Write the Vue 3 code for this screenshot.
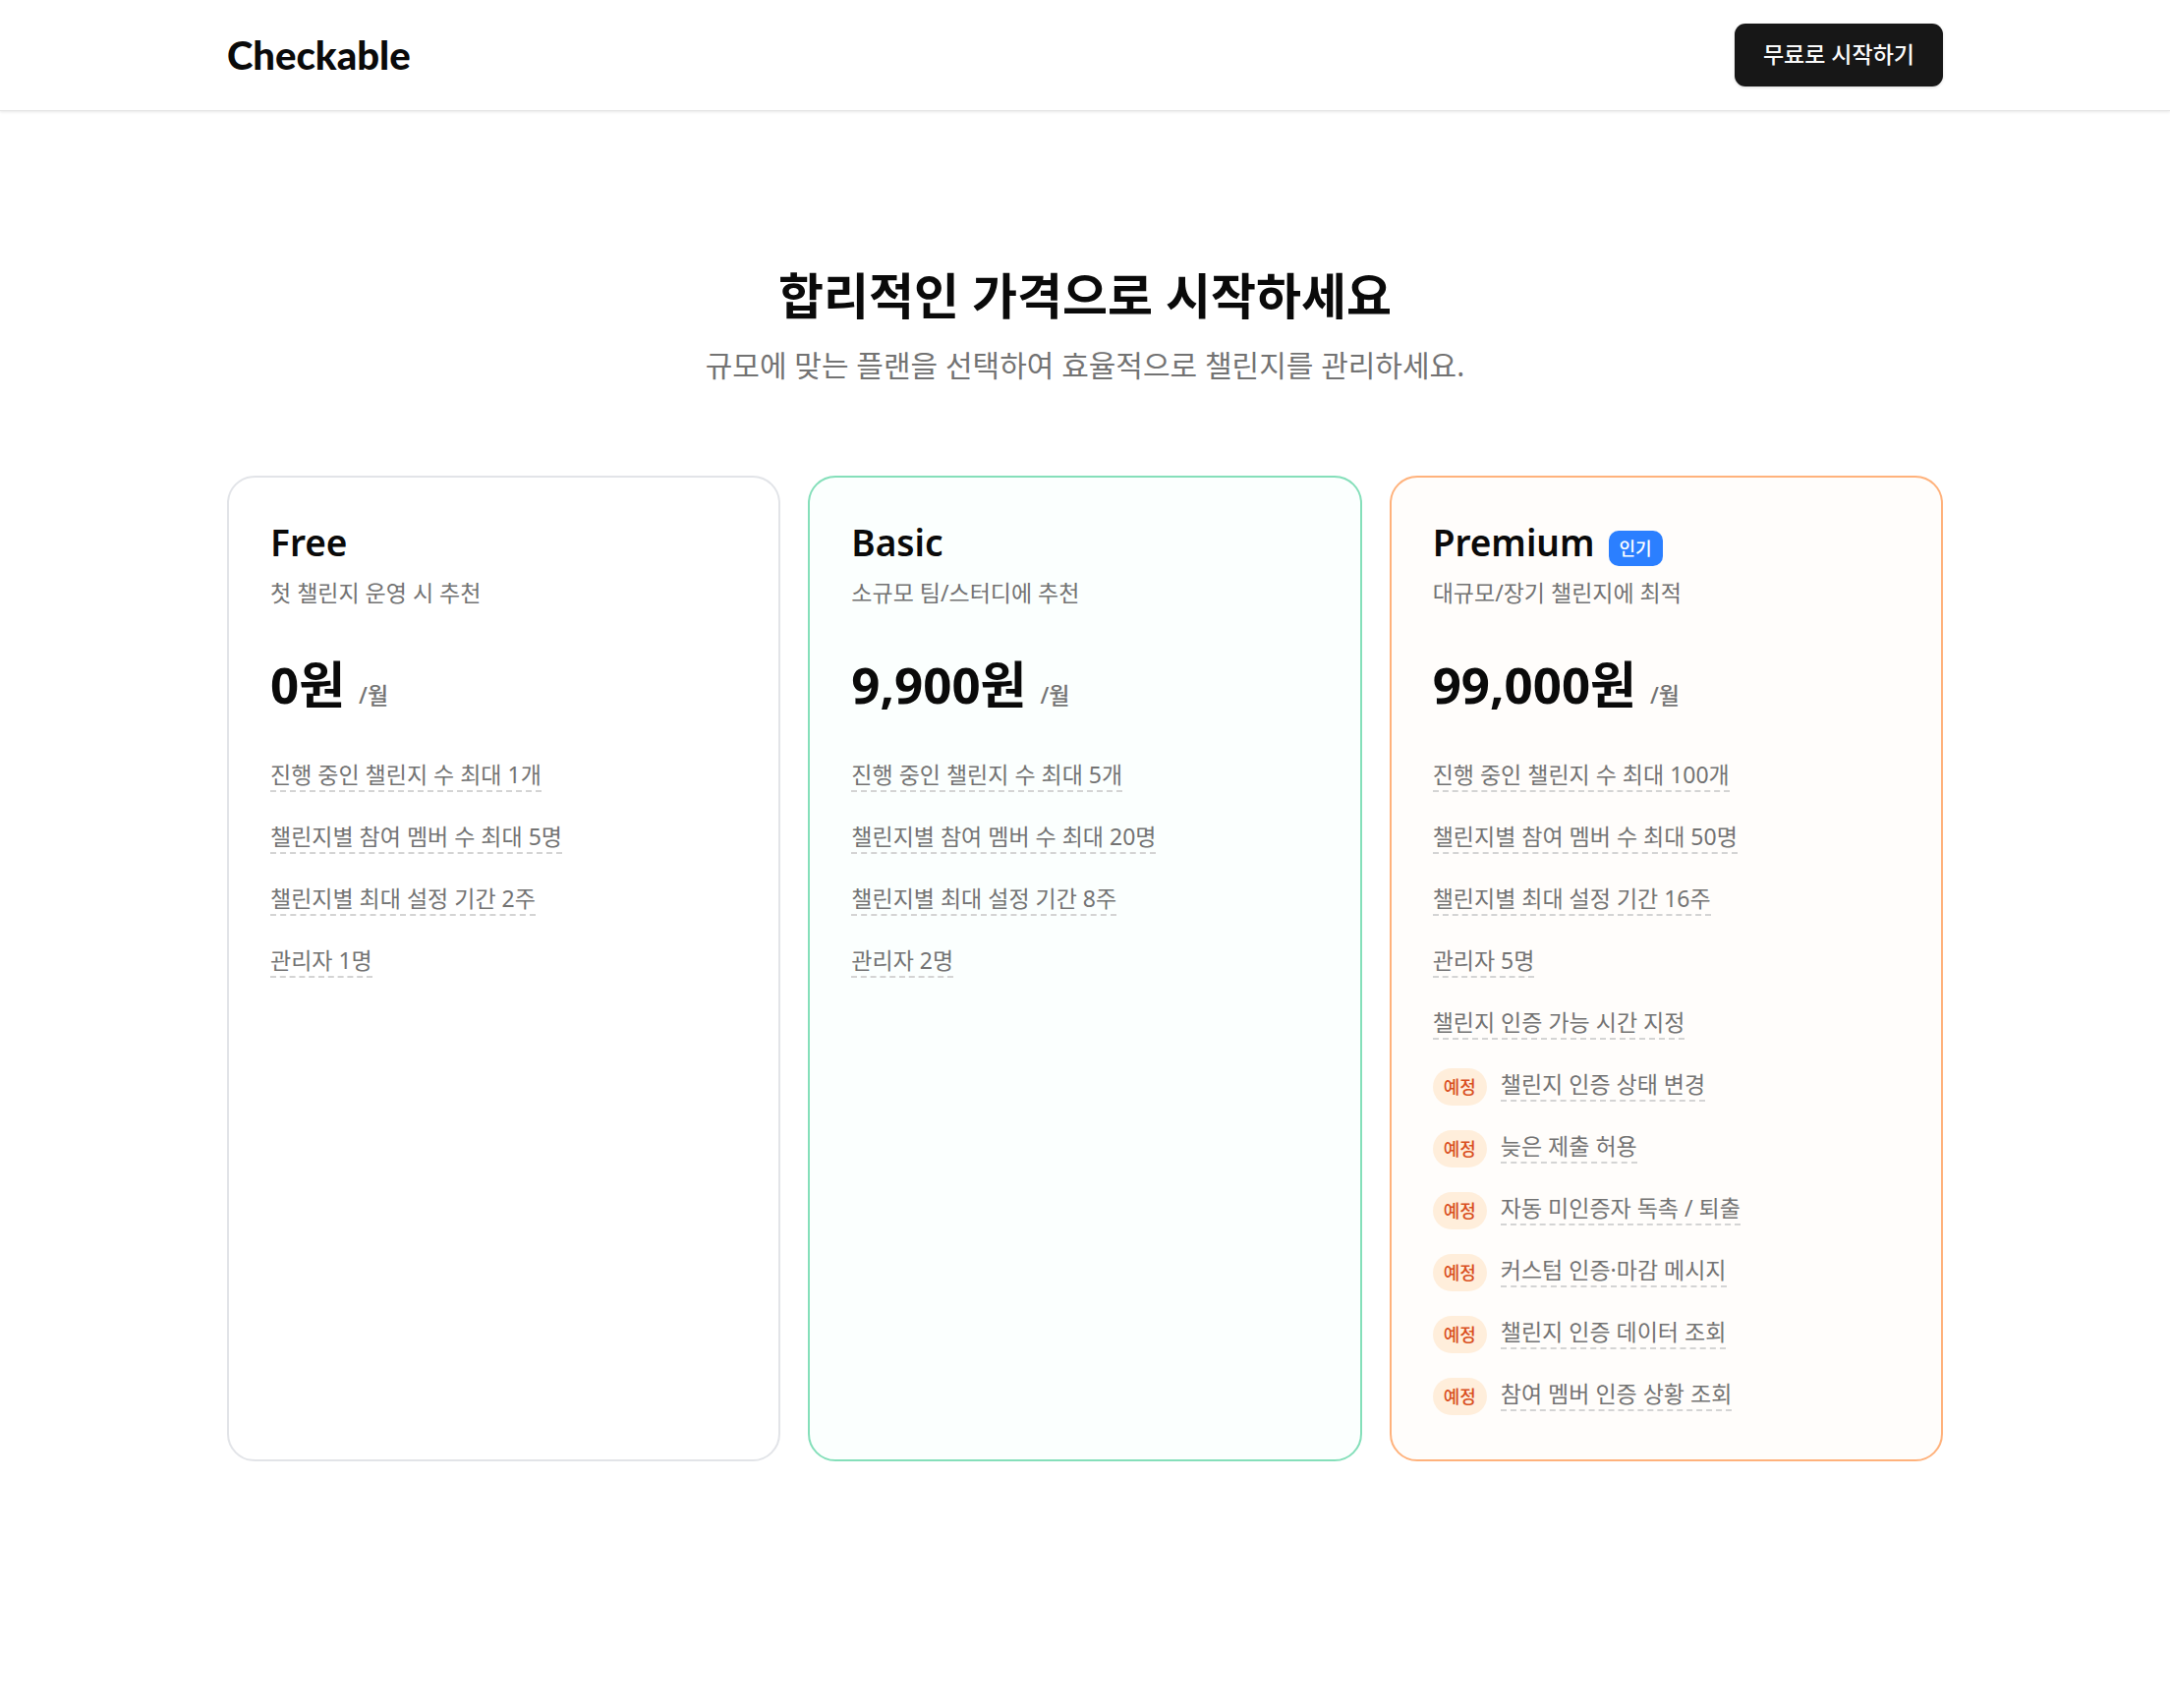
<script setup>
const plans = [
  {
    id: 'free',
    name: 'Free',
    summary: '첫 챌린지 운영 시 추천',
    price: '0원',
    features: [
      { text: '진행 중인 챌린지 수 최대 1개' },
      { text: '챌린지별 참여 멤버 수 최대 5명' },
      { text: '챌린지별 최대 설정 기간 2주' },
      { text: '관리자 1명' },
    ],
  },
  {
    id: 'basic',
    name: 'Basic',
    summary: '소규모 팀/스터디에 추천',
    price: '9,900원',
    features: [
      { text: '진행 중인 챌린지 수 최대 5개' },
      { text: '챌린지별 참여 멤버 수 최대 20명' },
      { text: '챌린지별 최대 설정 기간 8주' },
      { text: '관리자 2명' },
    ],
  },
  {
    id: 'premium',
    name: 'Premium',
    popular: true,
    summary: '대규모/장기 챌린지에 최적',
    price: '99,000원',
    features: [
      { text: '진행 중인 챌린지 수 최대 100개' },
      { text: '챌린지별 참여 멤버 수 최대 50명' },
      { text: '챌린지별 최대 설정 기간 16주' },
      { text: '관리자 5명' },
      { text: '챌린지 인증 가능 시간 지정' },
      { text: '챌린지 인증 상태 변경', planned: true },
      { text: '늦은 제출 허용', planned: true },
      { text: '자동 미인증자 독촉 / 퇴출', planned: true },
      { text: '커스텀 인증·마감 메시지', planned: true },
      { text: '챌린지 인증 데이터 조회', planned: true },
      { text: '참여 멤버 인증 상황 조회', planned: true },
    ],
  },
]
</script>

<template>
  <div class="page">
    <header class="header">
      <div class="container header-row">
        <a class="logo" href="#">Checkable</a>
        <button class="start" type="button">무료로 시작하기</button>
      </div>
    </header>

    <main class="container main">
      <div class="intro">
        <h1>합리적인 가격으로 시작하세요</h1>
        <p>규모에 맞는 플랜을 선택하여 효율적으로 챌린지를 관리하세요.</p>
      </div>

      <div class="plans">
        <section v-for="plan in plans" :key="plan.id" class="card" :class="plan.id">
          <div class="name-row">
            <h2>{{ plan.name }}</h2>
            <span v-if="plan.popular" class="popular">인기</span>
          </div>
          <p class="summary">{{ plan.summary }}</p>
          <p class="price">
            <strong>{{ plan.price }}</strong>
            <span>/월</span>
          </p>
          <ul class="features">
            <li v-for="feature in plan.features" :key="feature.text">
              <span v-if="feature.planned" class="planned">예정</span>
              <span class="feature">{{ feature.text }}</span>
            </li>
          </ul>
        </section>
      </div>
    </main>
  </div>
</template>

<style>
body {
  margin: 0;
  background: #fff;
}
</style>

<style scoped>
.page {
  color: #0a0a0a;
  font-family: "Noto Sans", "Noto Sans CJK KR", sans-serif;
}

h1,
h2,
p,
ul {
  margin: 0;
  padding: 0;
}

.container {
  box-sizing: border-box;
  width: 100%;
  max-width: 1810px;
  margin: 0 auto;
  padding: 0 32px;
}

.header {
  border-bottom: 1px solid #e5e5e5;
  box-shadow: 0 1px 3px rgba(0, 0, 0, 0.1);
}

.header-row {
  display: flex;
  align-items: center;
  justify-content: space-between;
  height: 112px;
}

.logo {
  color: #0a0a0a;
  font-family: Lato, sans-serif;
  font-size: 40px;
  font-weight: 900;
  line-height: 48px;
  text-decoration: none;
}

.start {
  height: 64px;
  padding: 0 29px 5px;
  border: 0;
  border-radius: 11px;
  background: #171717;
  box-shadow: 0 1px 3px rgba(0, 0, 0, 0.15);
  color: #fafafa;
  font-family: inherit;
  font-size: 23px;
  font-weight: 500;
  cursor: pointer;
}

.main {
  padding-top: 156px;
  padding-bottom: 160px;
}

.intro {
  display: flex;
  flex-direction: column;
  gap: 11px;
  margin-bottom: 84px;
  text-align: center;
}

.intro h1 {
  font-size: 50px;
  font-weight: 700;
  line-height: 64px;
}

.intro p {
  color: #737373;
  font-size: 30px;
  line-height: 56px;
}

.plans {
  display: grid;
  grid-template-columns: repeat(3, 1fr);
  gap: 28px;
}

.card {
  padding: 42px 42px 45px;
  border: 2px solid #e2e4e8;
  border-radius: 28px;
}

.basic {
  border-color: #85dfba;
  background: #fbfffe;
}

.premium {
  border-color: #ffb27c;
  background: #fffdfb;
}

.name-row {
  display: flex;
  align-items: flex-end;
  gap: 14px;
}

.name-row h2 {
  font-size: 37px;
  font-weight: 600;
  line-height: 48px;
}

.popular,
.planned {
  padding: 0 11px;
  font-size: 18px;
  font-weight: 500;
}

.popular {
  border-radius: 10px;
  background: #2b7fff;
  color: #fff;
  line-height: 36px;
}

.summary {
  color: #737373;
  font-size: 23px;
  line-height: 54px;
}

.price {
  display: flex;
  align-items: baseline;
  gap: 14px;
  margin: 30px 0 40px;
}

.price strong {
  font-size: 51px;
  font-weight: 700;
  line-height: 72px;
}

.price span {
  color: #737373;
  font-size: 23px;
  font-weight: 500;
  line-height: 24px;
}

.features {
  display: flex;
  flex-direction: column;
  gap: 25px;
  list-style: none;
}

.features li {
  display: flex;
  align-items: flex-start;
  gap: 14px;
  height: 38px;
}

.feature {
  border-bottom: 2px dashed #d4d4d4;
  color: #737373;
  font-size: 23px;
  line-height: 32px;
}

.planned {
  border-radius: 19px;
  background: #ffeedb;
  color: #d9501e;
  line-height: 38px;
}
</style>
